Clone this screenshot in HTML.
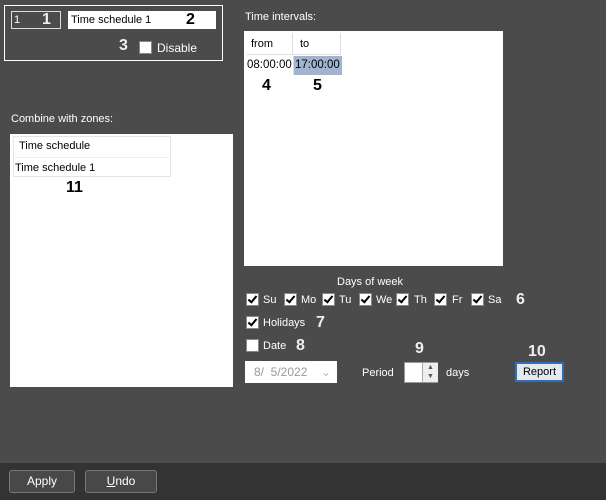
<!DOCTYPE html>
<html><head><style>
body{margin:0;width:606px;height:500px;background:#4b4b4b;position:relative;overflow:hidden;font-family:"Liberation Sans",sans-serif;font-size:11px;color:#fff}
.a{position:absolute}
.n{position:absolute;font-weight:bold;font-size:16px}
.cb{position:absolute;width:11px;height:11px;background:#fff;border:1px solid #888}
.cb.c::after{content:"";position:absolute;left:3px;top:0px;width:3px;height:7px;border:solid #000;border-width:0 2px 2px 0;transform:rotate(40deg)}
.btn{position:absolute;border:1px solid #777;border-radius:3px;background:#484848;text-align:center;line-height:21px;font-size:12px}
</style></head><body>
<div class="a" style="left:4px;top:5px;width:217px;height:54px;border:1px solid #fff"></div>
<div class="a" style="left:11px;top:11px;width:48px;height:16px;border:1px solid #ddd;line-height:16px;padding-left:2px;box-sizing:content-box;width:46px">1</div>
<div class="n" style="left:42px;top:11px;color:#eee">1</div>
<div class="a" style="left:68px;top:11px;width:148px;height:18px;background:#fff;color:#000;line-height:18px;padding-left:3px;box-sizing:border-box">Time schedule 1</div>
<div class="n" style="left:186px;top:11px;color:#000">2</div>
<div class="n" style="left:119px;top:37px;color:#eee">3</div>
<div class="cb" style="left:139px;top:41px"></div>
<div class="a" style="left:157px;top:41px;font-size:12px">Disable</div>

<div class="a" style="left:245px;top:11px">Time intervals:</div>
<div class="a" style="left:244px;top:31px;width:259px;height:235px;background:#fff"></div>
<div class="a" style="left:247px;top:33px;width:46px;height:22px;border-right:1px solid #ddd;border-bottom:1px solid #ddd;color:#000;line-height:22px;padding-left:4px;box-sizing:border-box">from</div>
<div class="a" style="left:293px;top:33px;width:48px;height:22px;border-right:1px solid #ddd;border-bottom:1px solid #ddd;color:#000;line-height:22px;padding-left:7px;box-sizing:border-box">to</div>
<div class="a" style="left:247px;top:56px;width:46px;height:19px;color:#000;line-height:19px;font-size:11.5px;border-right:1px solid #ddd">08:00:00</div>
<div class="a" style="left:294px;top:56px;width:47px;height:19px;background:#a0b4d0;color:#000;line-height:19px;font-size:11.5px;padding-left:1px">17:00:00</div>
<div class="n" style="left:262px;top:77px;color:#000">4</div>
<div class="n" style="left:313px;top:77px;color:#000">5</div>

<div class="a" style="left:11px;top:113px">Combine with zones:</div>
<div class="a" style="left:10px;top:134px;width:223px;height:253px;background:#fff"></div>
<div class="a" style="left:13px;top:136px;width:158px;height:41px;border:1px solid #e4e4e4;box-sizing:border-box"></div>
<div class="a" style="left:19px;top:140px;color:#000">Time schedule</div>
<div class="a" style="left:15px;top:157px;width:156px;border-top:1px solid #eee;color:#000;padding-top:4px">Time schedule 1</div>
<div class="n" style="left:66px;top:179px;color:#000">11</div>

<div class="a" style="left:337px;top:276px">Days of week</div>
<div class="cb c" style="left:246px;top:293px"></div><div class="a" style="left:263px;top:294px">Su</div>
<div class="cb c" style="left:284px;top:293px"></div><div class="a" style="left:301px;top:294px">Mo</div>
<div class="cb c" style="left:322px;top:293px"></div><div class="a" style="left:339px;top:294px">Tu</div>
<div class="cb c" style="left:359px;top:293px"></div><div class="a" style="left:376px;top:294px">We</div>
<div class="cb c" style="left:396px;top:293px"></div><div class="a" style="left:414px;top:294px">Th</div>
<div class="cb c" style="left:434px;top:293px"></div><div class="a" style="left:452px;top:294px">Fr</div>
<div class="cb c" style="left:471px;top:293px"></div><div class="a" style="left:488px;top:294px">Sa</div>
<div class="n" style="left:516px;top:291px;color:#eee">6</div>
<div class="cb c" style="left:246px;top:316px"></div><div class="a" style="left:263px;top:317px">Holidays</div>
<div class="n" style="left:316px;top:314px;color:#eee">7</div>
<div class="cb" style="left:246px;top:339px"></div><div class="a" style="left:263px;top:340px">Date</div>
<div class="n" style="left:296px;top:337px;color:#eee">8</div>
<div class="a" style="left:245px;top:361px;width:92px;height:22px;background:#fff;color:#999;line-height:22px;padding-left:9px;box-sizing:border-box;font-size:12px">8/&nbsp; 5/2022<span style="position:absolute;right:6px;color:#bbb">&#8964;</span></div>
<div class="a" style="left:362px;top:367px">Period</div>
<div class="a" style="left:404px;top:362px;width:34px;height:21px;border:1px solid #999;background:#fff;box-sizing:border-box"><div class="a" style="left:17px;top:0;width:15px;height:19px;background:#eee;border-left:1px solid #aaa;color:#555;font-size:7px;line-height:9px;text-align:center">▲<br>▼</div></div>
<div class="n" style="left:415px;top:340px;color:#eee">9</div>
<div class="a" style="left:446px;top:367px">days</div>
<div class="n" style="left:528px;top:343px;color:#eee">10</div>
<div class="a" style="left:515px;top:362px;width:49px;height:20px;background:#e4e9f0;border:2px solid #2e6fb8;box-sizing:border-box;color:#000;text-align:center;line-height:16px">Report</div>

<div class="a" style="left:0;top:463px;width:606px;height:37px;background:#333"></div>
<div class="btn" style="left:9px;top:470px;width:64px;height:21px">Apply</div>
<div class="btn" style="left:85px;top:470px;width:70px;height:21px"><u>U</u>ndo</div>
</body></html>
